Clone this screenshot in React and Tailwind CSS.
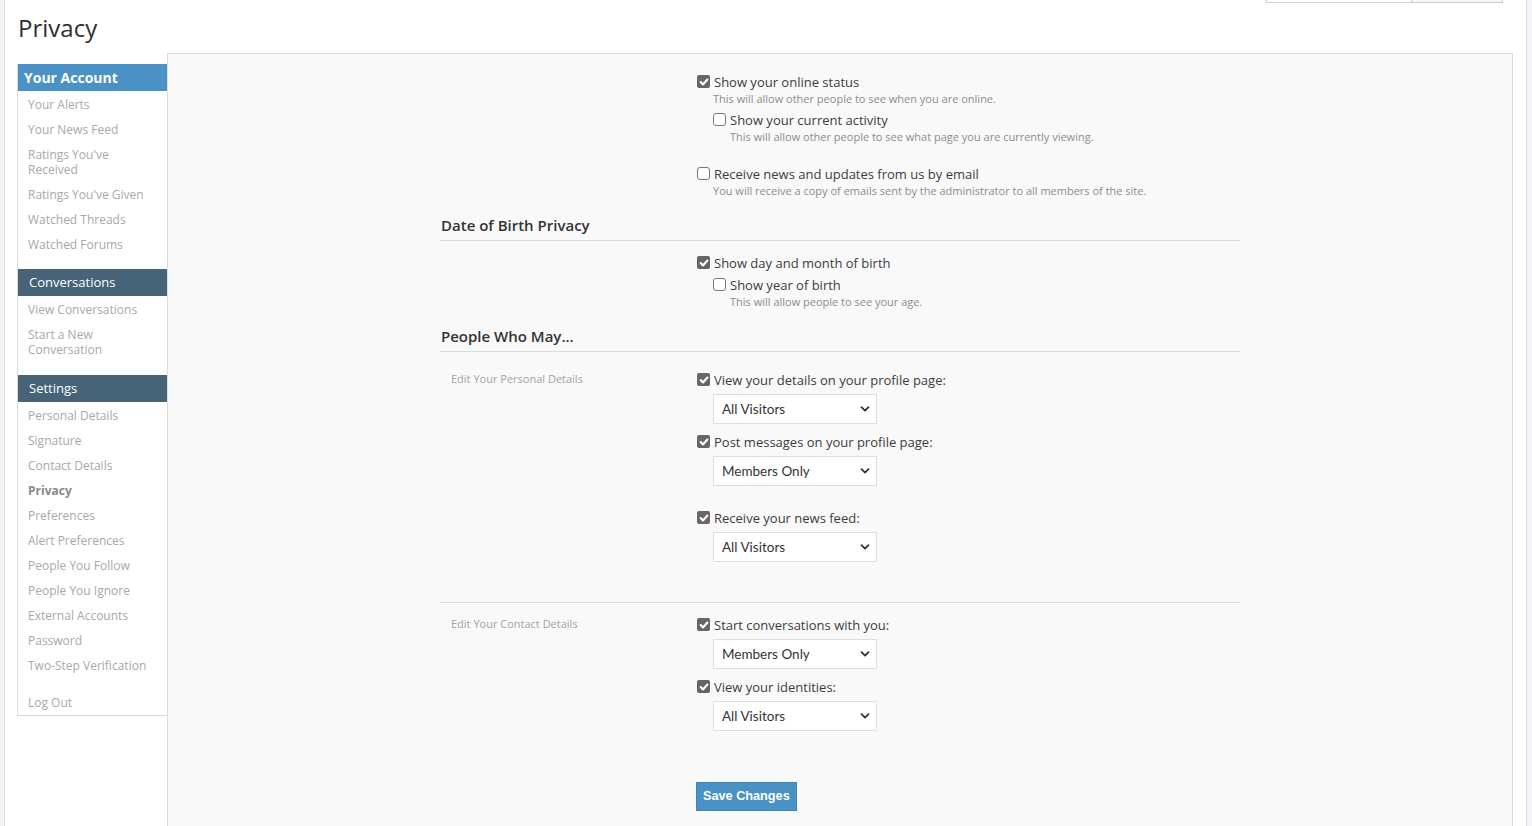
import React from 'react';

const accountLinks = [
  'Your Alerts',
  'Your News Feed',
  "Ratings You've Received",
  "Ratings You've Given",
  'Watched Threads',
  'Watched Forums',
];

const conversationLinks = ['View Conversations', 'Start a New Conversation'];

const settingsLinks = [
  'Personal Details',
  'Signature',
  'Contact Details',
  'Privacy',
  'Preferences',
  'Alert Preferences',
  'People You Follow',
  'People You Ignore',
  'External Accounts',
  'Password',
  'Two-Step Verification',
];

const Checkbox = ({ checked }) =>
  checked ? (
    <span className="mt-[2px] flex h-[13px] w-[13px] shrink-0 items-center justify-center rounded-[2px] bg-[#666]">
      <svg width="10" height="10" viewBox="0 0 10 10" fill="none">
        <path d="M1.7 5.1 L4 7.5 L8.4 2.5" stroke="white" strokeWidth="2.1" strokeLinecap="round" strokeLinejoin="round" />
      </svg>
    </span>
  ) : (
    <span className="mt-[2px] h-[13px] w-[13px] shrink-0 rounded-[3px] border border-[#777] bg-white" />
  );

const CheckRow = ({ checked, label, className = '' }) => (
  <div className={`flex h-[18px] items-start gap-[4px] ${className}`}>
    <Checkbox checked={checked} />
    <span className="text-[13px] leading-[18px] text-[#3c3c3c]">{label}</span>
  </div>
);

const Hint = ({ children, className = '' }) => (
  <p className={`text-[11px] leading-[16px] text-[#8c8c8c] ${className}`}>{children}</p>
);

const Select = ({ value }) => (
  <div className="ml-[16px] mt-[5px] flex h-[30px] w-[164px] items-center justify-between border border-[#dedede] bg-white pl-[8px] pr-[6px] font-['Lato'] text-[13.5px] text-[#333]">
    <span>{value}</span>
    <svg width="10" height="10" viewBox="0 0 10 10" fill="none">
      <path d="M1.5 3.2 L5 6.6 L8.5 3.2" stroke="#333" strokeWidth="1.8" strokeLinecap="round" strokeLinejoin="round" />
    </svg>
  </div>
);

const SectionHeader = ({ children, className = '' }) => (
  <h3 className={`border-b border-[#dcdcdc] pb-[5px] pl-[1px] text-[15px] font-semibold leading-[20px] text-[#333] ${className}`}>
    {children}
  </h3>
);

const SideHeader = ({ children, primary }) => (
  <div
    className={`flex h-[27px] items-center text-white ${
      primary ? 'bg-[#4a91c5] pl-[6px] text-[14px] font-bold' : 'bg-[#466378] pl-[11px] text-[13px]'
    }`}
  >
    {children}
  </div>
);

const SideLinks = ({ items }) => (
  <ul className="mt-[1px]">
    {items.map((item) => (
      <li
        key={item}
        className={`py-[5px] pl-[10px] pr-[14px] text-[12px] leading-[15px] ${
          item === 'Privacy' ? 'font-bold text-[#8a8a8a]' : 'text-[#a8a8a8]'
        }`}
      >
        {item}
      </li>
    ))}
  </ul>
);

const App = () => {
  return (
    <div className="min-h-[826px] bg-[#f3f5f8] font-['Open_Sans',sans-serif]">
      <div className="ml-[4px] mr-[5px] min-h-[826px] border-x border-[#dcdcdc] bg-white pl-[12px] pr-[13px]">
        <div className="flex h-[3px] justify-end pr-[10px]">
          <div className="flex h-[3px] w-[237px] border-x border-b border-[#cfcfcf]">
            <div className="w-[145px] border-r border-[#cfcfcf]" />
            <div className="flex-1 bg-[#f3f7fb]" />
          </div>
        </div>

        <h1 className="mt-[8px] mb-[8px] pl-[1px] text-[24px] leading-[34px] text-[#2f2f2f]">Privacy</h1>

        <div className="flex items-start">
          <nav className="mt-[11px] w-[150px] shrink-0 border-b border-l border-[#dcdcdc] bg-white">
            <SideHeader primary>Your Account</SideHeader>
            <SideLinks items={accountLinks} />
            <div className="h-[12px]" />
            <SideHeader>Conversations</SideHeader>
            <SideLinks items={conversationLinks} />
            <div className="h-[13px]" />
            <SideHeader>Settings</SideHeader>
            <SideLinks items={settingsLinks} />
            <div className="h-[11px]" />
            <SideLinks items={['Log Out']} />
          </nav>

          <main className="min-h-[800px] flex-1 border border-[#dcdcdc] bg-[#f9f9f9] pt-[19px] pb-[30px]">
            <form className="mx-auto w-[800px]">
              <div className="pl-[257px]">
                <CheckRow checked label="Show your online status" />
                <Hint className="pl-[16px]">This will allow other people to see when you are online.</Hint>
                <div className="mt-[4px] pl-[16px]">
                  <CheckRow label="Show your current activity" />
                  <Hint className="pl-[17px]">This will allow other people to see what page you are currently viewing.</Hint>
                </div>
                <CheckRow className="mt-[20px]" label="Receive news and updates from us by email" />
                <Hint className="pl-[16px]">You will receive a copy of emails sent by the administrator to all members of the site.</Hint>
              </div>

              <SectionHeader className="mt-[16px]">Date of Birth Privacy</SectionHeader>
              <div className="mt-[13px] pl-[257px]">
                <CheckRow checked label="Show day and month of birth" />
                <div className="mt-[4px] pl-[16px]">
                  <CheckRow label="Show year of birth" />
                  <Hint className="pl-[17px]">This will allow people to see your age.</Hint>
                </div>
              </div>

              <SectionHeader className="mt-[16px]">People Who May...</SectionHeader>

              <div className="mt-[19px] flex border-b border-[#dcdcdc] pb-[40px]">
                <div className="w-[257px] pl-[11px] text-[11px] leading-[16px] text-[#a3a3a3]">Edit Your Personal Details</div>
                <div>
                  <CheckRow checked label="View your details on your profile page:" />
                  <Select value="All Visitors" />
                  <CheckRow className="mt-[9px]" checked label="Post messages on your profile page:" />
                  <Select value="Members Only" />
                  <CheckRow className="mt-[23px]" checked label="Receive your news feed:" />
                  <Select value="All Visitors" />
                </div>
              </div>

              <div className="mt-[13px] flex">
                <div className="w-[257px] pl-[11px] text-[11px] leading-[16px] text-[#a3a3a3]">Edit Your Contact Details</div>
                <div>
                  <CheckRow checked label="Start conversations with you:" />
                  <Select value="Members Only" />
                  <CheckRow className="mt-[9px]" checked label="View your identities:" />
                  <Select value="All Visitors" />
                </div>
              </div>

              <div className="mt-[51px] pl-[256px]">
                <button
                  type="button"
                  className="h-[29px] border border-[#3f84b8] bg-[#4a91c5] px-[6px] font-['Liberation_Sans',sans-serif] text-[12.7px] font-bold text-white"
                >
                  Save Changes
                </button>
              </div>
            </form>
          </main>
        </div>
      </div>
    </div>
  );
};

export default App;
